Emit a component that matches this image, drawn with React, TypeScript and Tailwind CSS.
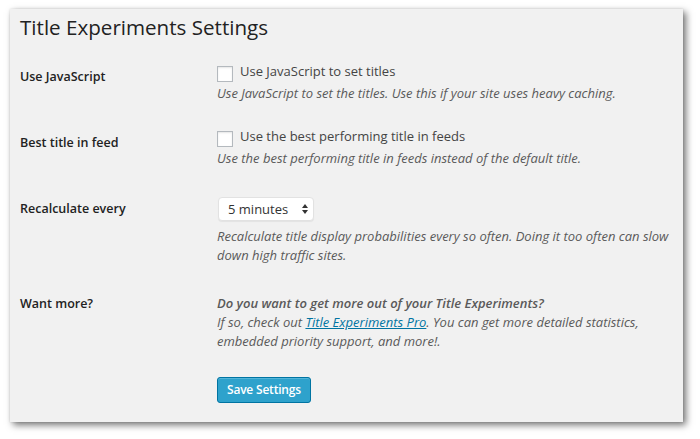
import React from "react";

function Checkbox() {
  return (
    <span className="block w-[16px] h-[16px] bg-white border border-[#b4b9be] shadow-[inset_0_1px_2px_rgba(0,0,0,0.1)] shrink-0" />
  );
}

export default function App() {
  return (
    <div className="w-[700px] h-[439px] bg-white overflow-hidden pt-[9px] pl-[10px]" style={{ fontFamily: '"Open Sans", "Noto Sans", sans-serif' }}>
      <div className="w-[673px] h-[413px] bg-[#f1f1f1] shadow-[3px_3px_7px_rgba(0,0,0,0.55),0_0_2px_rgba(0,0,0,0.12)] px-[10px] pt-[4px]">
        <h2 className="text-[20.6px] leading-[29px] text-[#222] font-normal">Title Experiments Settings</h2>

        {/* Row 1 */}
        <div className="flex mt-[20px]">
          <div className="w-[197px] shrink-0 pt-[5px] text-[12.5px] leading-[20px] font-semibold text-[#222]">Use JavaScript</div>
          <div className="flex-1">
            <label className="flex items-center gap-[7px] h-[20px] text-[13px] text-[#444]">
              <span className="mt-[4px]"><Checkbox /></span>
              Use JavaScript to set titles
            </label>
            <p className="mt-[2px] text-[13px] leading-[19px] italic text-[#5a5a5a]">
              Use JavaScript to set the titles. Use this if your site uses heavy caching.
            </p>
          </div>
        </div>

        {/* Row 2 */}
        <div className="flex mt-[24px]">
          <div className="w-[197px] shrink-0 pt-[6px] text-[12.5px] leading-[20px] font-semibold text-[#222]">Best title in feed</div>
          <div className="flex-1">
            <label className="flex items-center gap-[7px] h-[20px] text-[13px] text-[#444]">
              <span className="mt-[4px]"><Checkbox /></span>
              Use the best performing title in feeds
            </label>
            <p className="mt-[2px] text-[13px] leading-[19px] italic text-[#5a5a5a]">
              Use the best performing title in feeds instead of the default title.
            </p>
          </div>
        </div>

        {/* Row 3 */}
        <div className="flex mt-[29px]">
          <div className="w-[197px] shrink-0 pt-[2px] text-[12.5px] leading-[20px] font-semibold text-[#222]">Recalculate every</div>
          <div className="flex-1">
            <div className="relative w-[96px] h-[24px] ml-[1px]">
              <div className="w-full h-full bg-white border border-[#e2e2e2] rounded-[4px] shadow-[0_1px_1px_rgba(0,0,0,0.06)] pl-[9px] text-[13px] leading-[22px] text-[#333]">
                5 minutes
              </div>
              <svg className="absolute right-[6px] top-[7px]" width="6" height="10" viewBox="0 0 6 10">
                <path d="M3 0 L6 4 L0 4 Z" fill="#333" />
                <path d="M0 6 L6 6 L3 10 Z" fill="#333" />
              </svg>
            </div>
            <p className="mt-[6px] text-[13px] leading-[19px] italic text-[#5a5a5a] w-[460px]">
              Recalculate title display probabilities every so often. Doing it too often can slow down high traffic sites.
            </p>
          </div>
        </div>

        {/* Row 4 */}
        <div className="flex mt-[29px]">
          <div className="w-[197px] shrink-0 text-[12.5px] leading-[20px] font-semibold text-[#222]">Want more?</div>
          <div className="flex-1">
            <div className="text-[13px] leading-[19px] italic text-[#5a5a5a] w-[460px]">
              <div className="font-semibold">Do you want to get more out of your Title Experiments?</div>
              <div>
                If so, check out <span className="text-[#0074a2] underline">Title Experiments Pro</span>. You can get more detailed statistics, embedded priority support, and more!.
              </div>
            </div>
            <button className="mt-[26px] h-[26px] px-[9px] bg-[#2ea2cc] border border-[#0074a2] rounded-[3px] text-white text-[12px] tracking-[-0.2px] font-semibold leading-[24px] shadow-[inset_0_1px_0_rgba(120,200,230,0.5)]">
              Save Settings
            </button>
          </div>
        </div>
      </div>
    </div>
  );
}
